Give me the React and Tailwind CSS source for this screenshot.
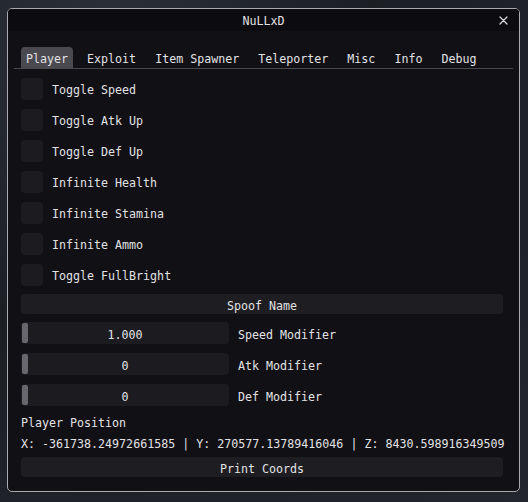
import React from "react";

const mono = { fontFamily: '"DejaVu Sans Mono", "Liberation Mono", monospace' };

const tabs = ["Player", "Exploit", "Item Spawner", "Teleporter", "Misc", "Info", "Debug"];
const toggles = [
  "Toggle Speed",
  "Toggle Atk Up",
  "Toggle Def Up",
  "Infinite Health",
  "Infinite Stamina",
  "Infinite Ammo",
  "Toggle FullBright",
];
const sliders = [
  { value: "1.000", label: "Speed Modifier" },
  { value: "0", label: "Atk Modifier" },
  { value: "0", label: "Def Modifier" },
];

function Checkbox({ label }) {
  return (
    <div className="flex items-center h-[22px] mt-[9px]">
      <div className="w-[22px] h-[22px] rounded-[4px] bg-[#1c1b20]" />
      <span className="ml-[9px] leading-[14px] pt-[2px]">{label}</span>
    </div>
  );
}

function Slider({ value, label, first }) {
  return (
    <div className={`flex items-center h-[22px] ${first ? "mt-[8px]" : "mt-[9px]"}`}>
      <div className="relative w-[208px] h-[22px] rounded-[4px] bg-[#1c1b20] flex items-center justify-center">
        <div className="absolute left-[1px] top-[1px] bottom-[1px] w-[6px] rounded-[2px] bg-[#68676d]" />
        <span className="leading-[14px] pt-[3px]">{value}</span>
      </div>
      <span className="ml-[9px] leading-[14px] pt-[3px]">{label}</span>
    </div>
  );
}

export default function App() {
  return (
    <div
      className="w-[528px] h-[502px] overflow-hidden pt-[8px] pl-[7px] bg-[radial-gradient(ellipse_at_20%_10%,#2c3139_0%,#1b1e23_45%,#23272d_100%)] text-[#e2e2e4] text-[11.65px]"
      style={mono}
    >
      <div className="w-[513px] h-[484px] border border-[#a9a9ae] rounded-[5px] bg-[#111015] flex flex-col overflow-hidden">
        {/* title bar */}
        <div className="relative h-[22px] bg-[#0c0b0f] flex items-center justify-center">
          <span className="leading-[14px] pt-[2px]">NuLLxD</span>
          <svg
            className="absolute right-[11px] top-[7px]"
            width="9"
            height="9"
            viewBox="0 0 9 9"
          >
            <path d="M1 1 L8 8 M8 1 L1 8" stroke="#d8d8dc" strokeWidth="1.3" strokeLinecap="round" />
          </svg>
        </div>

        <div className="flex flex-col pl-[13px] pr-[16px]">
          {/* tab bar */}
          <div className="flex items-end gap-[9px] mt-[16px] h-[21px]">
            {tabs.map((t, i) => (
              <div
                key={t}
                className={`h-[21px] px-[5px] pt-[2px] flex items-center rounded-t-[4px] leading-[14px] ${
                  i === 0 ? "bg-[#4a4950]" : ""
                }`}
              >
                {t}
              </div>
            ))}
          </div>
          <div className="h-[1px] bg-[#4a4950] ml-[-7px] mr-[-10px]" />

          {toggles.map((t) => (
            <Checkbox key={t} label={t} />
          ))}

          <div className="mt-[8px] h-[20px] pt-[3px] rounded-[4px] bg-[#1e1d22] flex items-center justify-center leading-[14px]">
            Spoof Name
          </div>

          {sliders.map((s, i) => (
            <Slider key={s.label} value={s.value} label={s.label} first={i === 0} />
          ))}

          <div className="mt-[9px] h-[14px] leading-[14px] pt-[1px]">Player Position</div>
          <div className="mt-[7px] h-[14px] leading-[14px] pt-[1px] whitespace-nowrap">
            X: -361738.24972661585 | Y: 270577.13789416046 | Z: 8430.598916349509
          </div>

          <div className="mt-[7px] h-[20px] pt-[3px] rounded-[4px] bg-[#1e1d22] flex items-center justify-center leading-[14px]">
            Print Coords
          </div>
        </div>
      </div>
    </div>
  );
}
